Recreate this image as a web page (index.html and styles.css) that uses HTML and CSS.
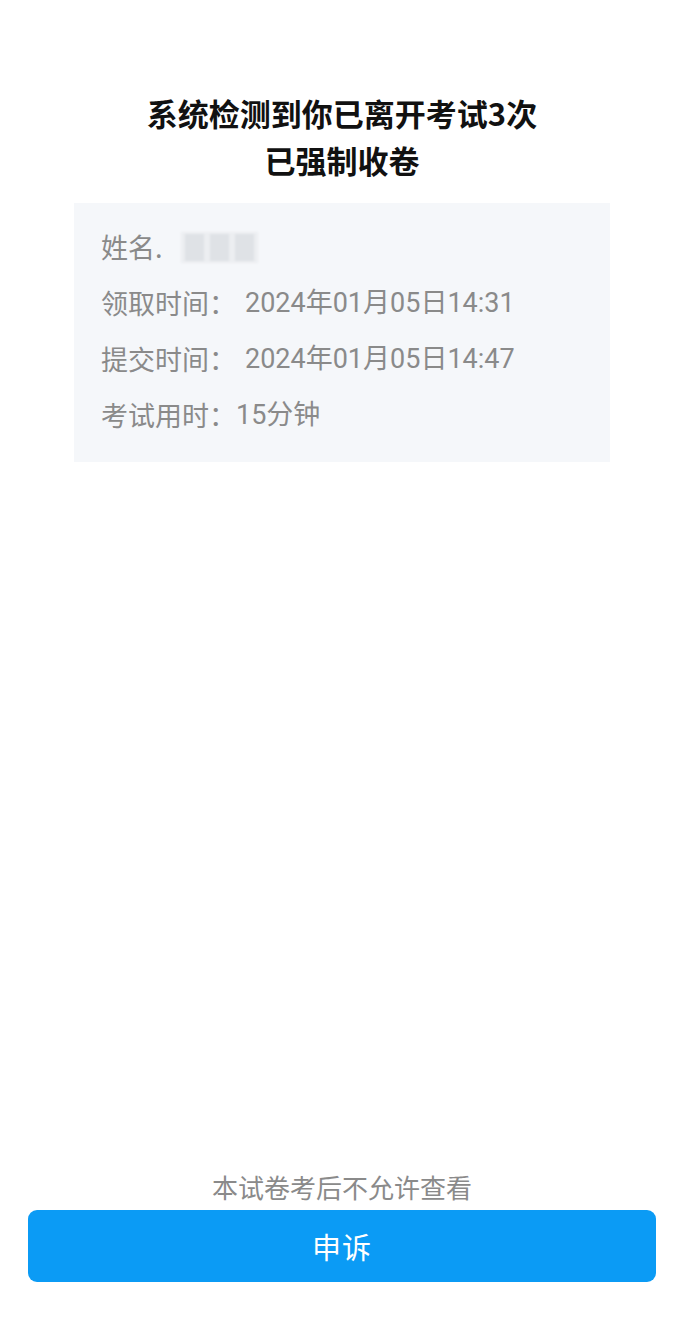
FILE: index.html
```html
<!DOCTYPE html>
<html lang="zh-CN">
<head>
<meta charset="utf-8">
<title>考试结果</title>
<link rel="stylesheet" href="styles.css">
</head>
<body>
<div class="page">
  <main class="content">
    <h1 class="title">系统检测到你已离开考试3次<br>已强制收卷</h1>
    <section class="info">
      <div class="row">
        <span class="label">姓名.</span>
        <span class="masked" aria-label="已隐藏">
          <i></i><i></i><i></i>
        </span>
      </div>
      <div class="row"><span class="label">领取时间：</span><span class="value spaced">2024年01月05日14:31</span></div>
      <div class="row"><span class="label">提交时间：</span><span class="value spaced">2024年01月05日14:47</span></div>
      <div class="row"><span class="label">考试用时：</span><span class="value">15分钟</span></div>
    </section>
  </main>
  <footer class="footer">
    <p class="notice">本试卷考后不允许查看</p>
    <button class="appeal" type="button">申诉</button>
  </footer>
</div>
</body>
</html>
```

FILE: styles.css
```css
* {
  box-sizing: border-box;
}

html, body {
  margin: 0;
  padding: 0;
  background: #ffffff;
}

body {
  font-family: "Noto Sans CJK SC", "Noto Sans", Roboto, sans-serif;
  color: #111;
}

.page {
  min-height: 100vh;
  display: flex;
  flex-direction: column;
}

.content {
  flex: 1;
  padding-top: 89px;
  display: flex;
  flex-direction: column;
  align-items: center;
}

.title {
  margin: 0;
  font-size: 31px;
  line-height: 47px;
  font-weight: 700;
  text-align: center;
  color: #111;
}

.info {
  margin-top: 20px;
  width: 536px;
  background: #f5f7fa;
  padding: 16px 27px 19px;
  color: #8a8a8a;
  font-size: 27px;
}

.row {
  height: 56px;
  display: flex;
  align-items: center;
  line-height: 56px;
}

.value {
  font-family: Roboto, "Noto Sans CJK SC", sans-serif;
}

.value.spaced {
  margin-left: 9px;
}

/* name is hidden behind a soft pixelated block */
.masked {
  margin-left: 18px;
  width: 77px;
  height: 31px;
  display: flex;
  gap: 6px;
  background: #eceef1;
  filter: blur(1.2px);
  padding: 2px 4px;
}

.masked i {
  flex: 1;
  background: #dfe2e6;
}

.footer {
  display: flex;
  flex-direction: column;
  align-items: center;
  padding: 0 28px 45px;
}

.notice {
  margin: 0 0 6px;
  font-size: 26px;
  line-height: 34px;
  color: #8a8a8a;
}

.appeal {
  width: 100%;
  height: 72px;
  border: none;
  border-radius: 9px;
  background: #0b9bf5;
  color: #fff;
  font-family: "Noto Sans CJK SC", sans-serif;
  font-size: 29px;
  letter-spacing: 1px;
}
```
